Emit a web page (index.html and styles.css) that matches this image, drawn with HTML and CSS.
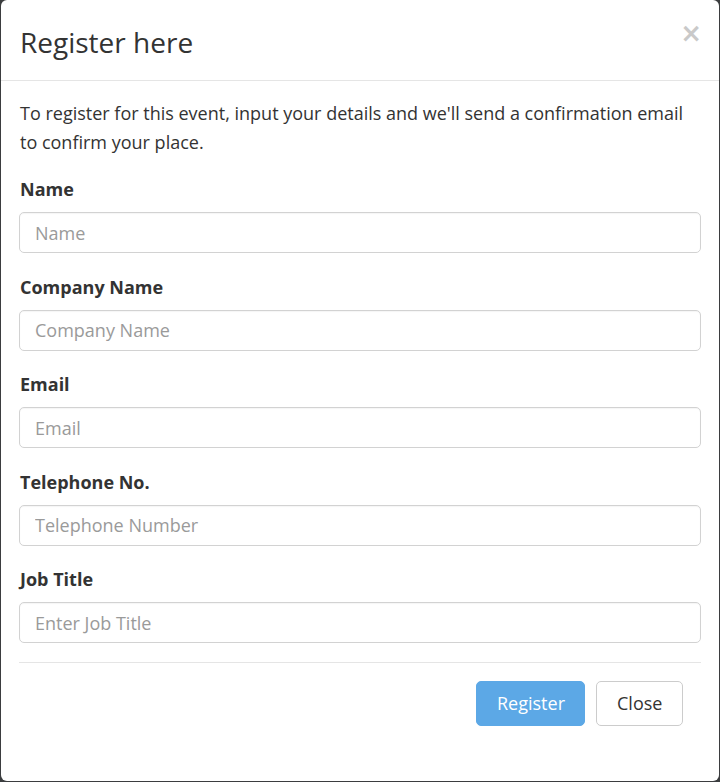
FILE: index.html
```html
<!DOCTYPE html>
<html lang="en">
<head>
<meta charset="utf-8">
<title>Register here</title>
<link rel="stylesheet" href="styles.css">
</head>
<body>
<div class="modal">
  <div class="modal-header">
    <h4 class="modal-title">Register here</h4>
    <button class="close" type="button" aria-label="Close">&times;</button>
  </div>
  <div class="modal-body">
    <p class="intro">To register for this event, input your details and we'll send a confirmation email to confirm your place.</p>
    <div class="form-group">
      <label class="label" for="name">Name</label>
      <input class="form-control" id="name" type="text" placeholder="Name">
    </div>
    <div class="form-group">
      <label class="label" for="company">Company Name</label>
      <input class="form-control" id="company" type="text" placeholder="Company Name">
    </div>
    <div class="form-group">
      <label class="label" for="email">Email</label>
      <input class="form-control" id="email" type="text" placeholder="Email">
    </div>
    <div class="form-group">
      <label class="label" for="tel">Telephone No.</label>
      <input class="form-control" id="tel" type="text" placeholder="Telephone Number">
    </div>
    <div class="form-group">
      <label class="label" for="job">Job Title</label>
      <input class="form-control" id="job" type="text" placeholder="Enter Job Title">
    </div>
    <div class="modal-footer">
      <button class="btn btn-primary" type="button">Register</button>
      <button class="btn btn-default" type="button">Close</button>
    </div>
  </div>
</div>
</body>
</html>
```
FILE: styles.css
```css
html, body {
  margin: 0;
  padding: 0;
}
body {
  background: #3b3d3f;
  font-family: "Open Sans", "Noto Sans", sans-serif;
  color: #333;
  font-size: 18px;
  line-height: 28.5px;
}
.modal {
  box-sizing: border-box;
  margin: 0 1px 0 1px;
  height: 781px;
  background: #fff;
  border-radius: 6px;
  overflow: hidden;
}
.modal-header {
  height: 80px;
  border-bottom: 1px solid #e5e5e5;
  display: flex;
  align-items: center;
  justify-content: space-between;
  padding: 0 17px 0 19px;
}
.modal-title {
  margin: 0;
  font-size: 28px;
  font-weight: 500;
  line-height: 36px;
  color: #333;
  padding-top: 3px;
}
.close {
  border: 0;
  background: none;
  padding: 0;
  margin: -15px 0 0 0;
  font-family: "DejaVu Sans", sans-serif;
  font-size: 26px;
  font-weight: bold;
  line-height: 1;
  color: #c9c9c9;
}
.modal-body {
  padding: 18px 18px 0 18px;
}
.intro {
  margin: 0 0 19px 1px;
}
.form-group {
  margin-bottom: 19.5px;
}
.label {
  display: block;
  font-weight: 700;
  margin: 0 0 9px 1px;
  line-height: 28px;
}
.form-control {
  display: block;
  box-sizing: border-box;
  width: 100%;
  height: 41px;
  padding: 0 15px;
  border: 1px solid #d2d2d2;
  border-radius: 5px;
  font-family: inherit;
  font-size: 18px;
  color: #555;
  background: #fff;
  box-shadow: inset 0 1px 1px rgba(0,0,0,.04);
}
.form-control::placeholder {
  color: #9a9a9a;
}
.modal-footer {
  border-top: 1px solid #e5e5e5;
  margin-top: -1px;
  padding: 18px 18px 0 0;
  display: flex;
  justify-content: flex-end;
  gap: 11px;
}
.btn {
  height: 45px;
  border-radius: 5px;
  font-family: inherit;
  font-size: 18px;
  padding: 0 20px;
  cursor: pointer;
}
.btn-primary {
  background: #5ca8e6;
  border: 1px solid #5ca8e6;
  color: #fff;
  width: 109px;
}
.btn-default {
  background: #fff;
  border: 1px solid #cccccc;
  color: #333;
  width: 87px;
}
```
